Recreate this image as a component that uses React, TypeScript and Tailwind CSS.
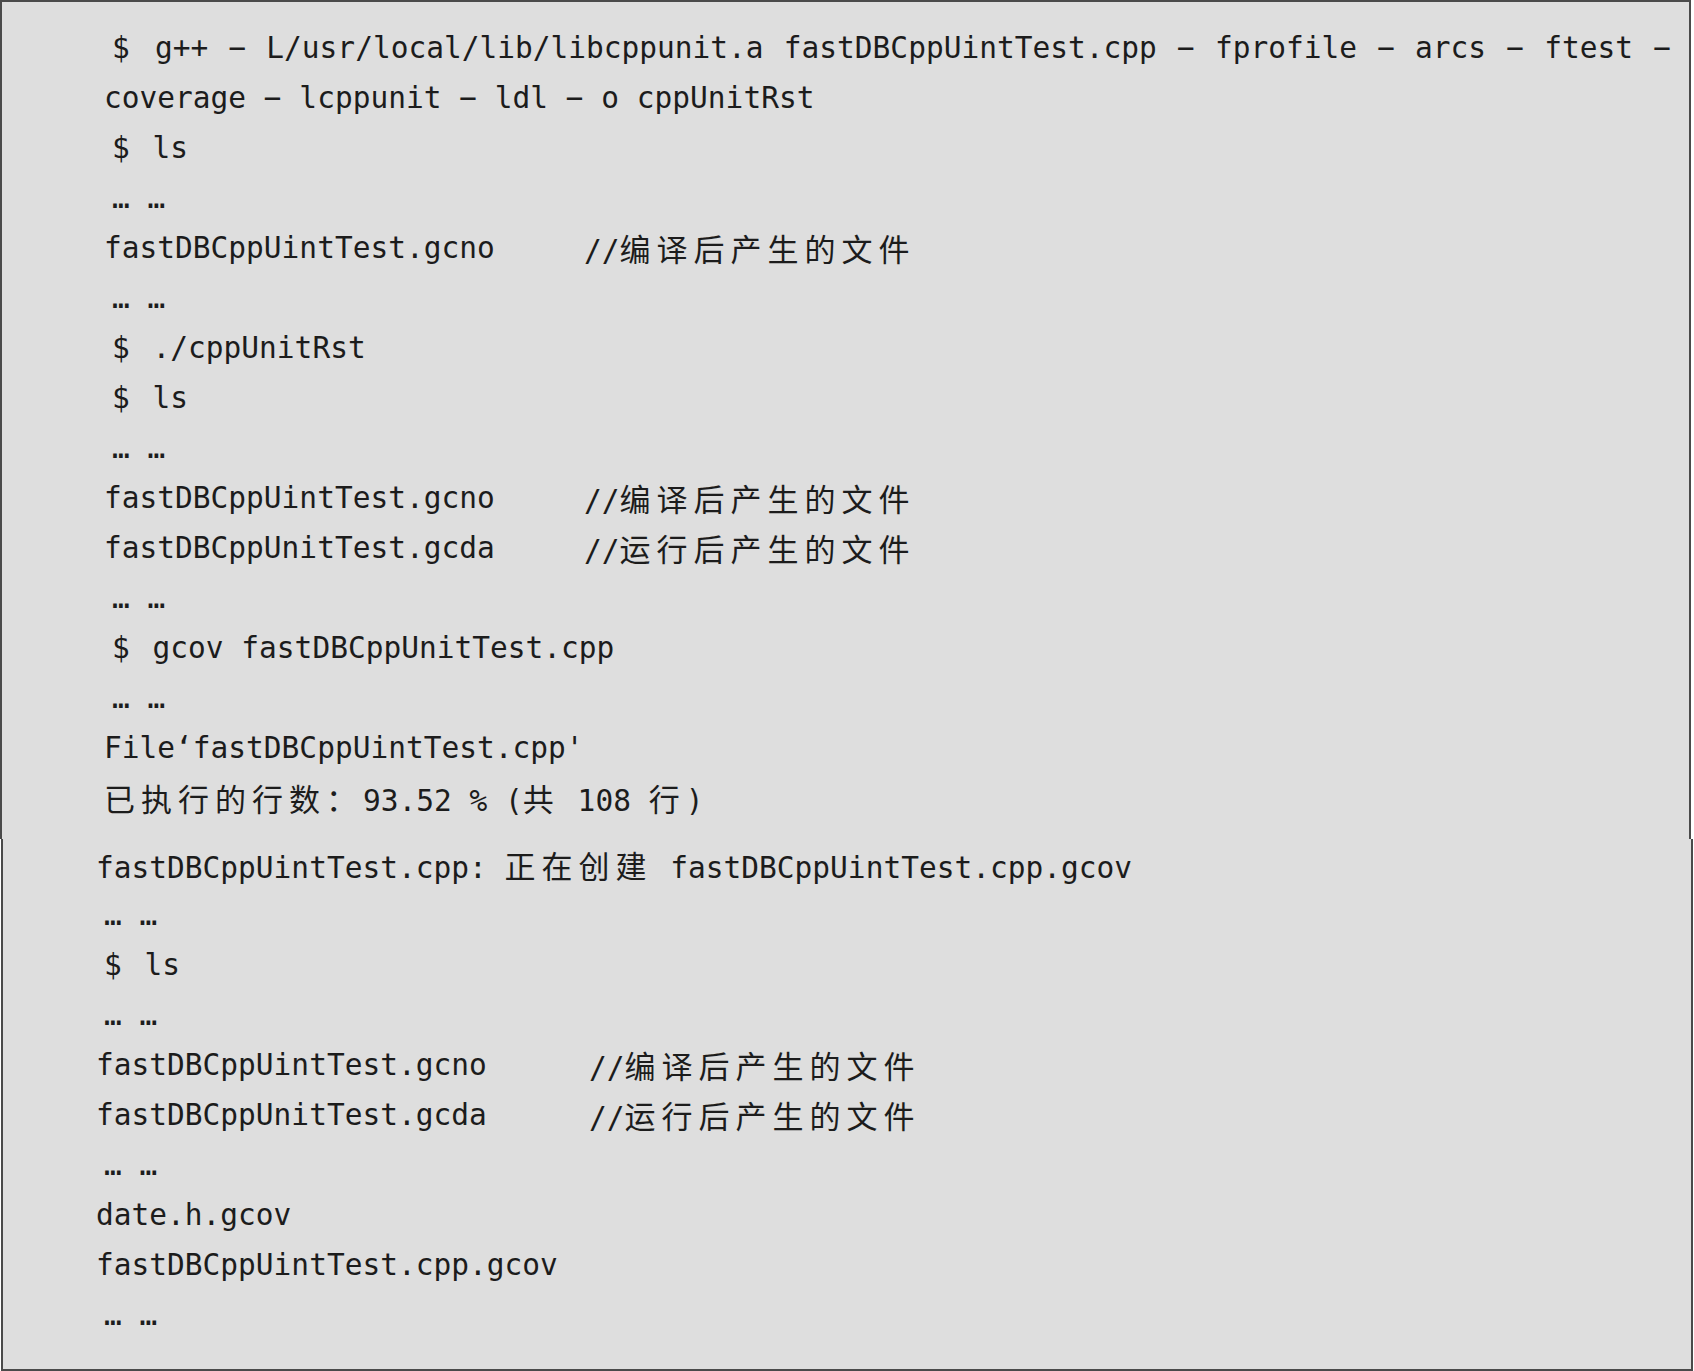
import type { ReactNode } from "react";

type Row =
  | { kind: "cmd"; text: string; justify?: boolean }
  | { kind: "dots" }
  | { kind: "plain"; text: string }
  | { kind: "file"; name: string; comment: string };

const topRows: Row[] = [
  { kind: "cmd", text: "g++ − L/usr/local/lib/libcppunit.a fastDBCppUintTest.cpp − fprofile − arcs − ftest −", justify: true },
  { kind: "plain", text: "coverage − lcppunit − ldl − o cppUnitRst" },
  { kind: "cmd", text: "ls" },
  { kind: "dots" },
  { kind: "file", name: "fastDBCppUintTest.gcno", comment: "//编译后产生的文件" },
  { kind: "dots" },
  { kind: "cmd", text: "./cppUnitRst" },
  { kind: "cmd", text: "ls" },
  { kind: "dots" },
  { kind: "file", name: "fastDBCppUintTest.gcno", comment: "//编译后产生的文件" },
  { kind: "file", name: "fastDBCppUnitTest.gcda", comment: "//运行后产生的文件" },
  { kind: "dots" },
  { kind: "cmd", text: "gcov fastDBCppUnitTest.cpp" },
  { kind: "dots" },
  { kind: "plain", text: "File‘fastDBCppUintTest.cpp'" },
  { kind: "plain", text: "已执行的行数：93.52 % (共 108 行)" },
];

const bottomRows: Row[] = [
  { kind: "plain", text: "fastDBCppUintTest.cpp: 正在创建 fastDBCppUintTest.cpp.gcov" },
  { kind: "dots" },
  { kind: "cmd", text: "ls" },
  { kind: "dots" },
  { kind: "file", name: "fastDBCppUintTest.gcno", comment: "//编译后产生的文件" },
  { kind: "file", name: "fastDBCppUnitTest.gcda", comment: "//运行后产生的文件" },
  { kind: "dots" },
  { kind: "plain", text: "date.h.gcov" },
  { kind: "plain", text: "fastDBCppUintTest.cpp.gcov" },
  { kind: "dots" },
];

// CJK runs get a wider advance, like the book's full-width glyphs
function withCjk(text: string): ReactNode[] {
  return text.split(/([\u3000-\u9fff\uff00-\uffef]+)/).map((part, i) =>
    /[\u3000-\u9fff\uff00-\uffef]/.test(part) ? (
      <span key={i} className="font-['Noto_Sans_CJK_SC',sans-serif] text-[31px] tracking-[6px]">
        {part}
      </span>
    ) : (
      <span key={i}>{part}</span>
    ),
  );
}

function RowLine({ row, nameWidth }: { row: Row; nameWidth: string }) {
  if (row.kind === "dots") {
    return <div className="h-[50px] pl-2 leading-[50px]">… …</div>;
  }
  if (row.kind === "cmd") {
    return (
      <div
        className={
          row.justify
            ? "h-[50px] w-[1567px] whitespace-pre pl-2 leading-[50px] [text-align-last:justify]"
            : "h-[50px] whitespace-pre pl-2 leading-[50px]"
        }
      >
        <span className="mr-[5px]">$ </span>
        {row.text}
      </div>
    );
  }
  if (row.kind === "file") {
    return (
      <div className="flex h-[50px] leading-[50px]">
        <span className={nameWidth}>{row.name}</span>
        <span>{withCjk(row.comment)}</span>
      </div>
    );
  }
  return <div className="h-[50px] whitespace-pre leading-[50px]">{withCjk(row.text)}</div>;
}

export default function App() {
  return (
    <div className="h-[1371px] w-[1694px] bg-white font-['DejaVu_Sans_Mono','Noto_Sans_CJK_SC',monospace] text-[29.5px] text-[#1c1c1c]">
      {/* upper half of the scanned box */}
      <section className="h-[839px] w-[1691px] border-x-2 border-t-2 border-[#4a4a4a] bg-[#dedede] pl-[102px] pt-[21px]">
        {topRows.map((row, i) => (
          <RowLine key={i} row={row} nameWidth="w-[480px]" />
        ))}
      </section>
      {/* lower half, pasted a pixel to the right */}
      <section className="ml-px h-[532px] w-[1692px] border-x-2 border-b-2 border-[#4a4a4a] bg-[#dedede] pl-[93px] pt-px">
        {bottomRows.map((row, i) => (
          <RowLine key={i} row={row} nameWidth="w-[493px]" />
        ))}
      </section>
    </div>
  );
}
